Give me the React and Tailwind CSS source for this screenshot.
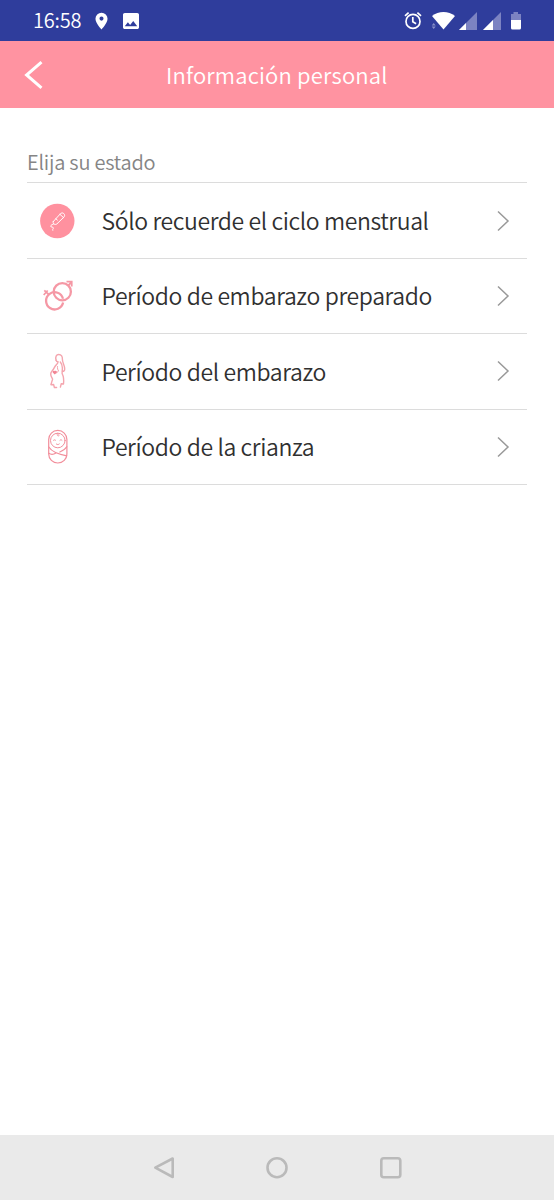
const CycleIcon = () => (
  <svg viewBox="0 0 50 50" className="h-[50px] w-[50px]" fill="none">
    <circle cx="23.300" cy="25" r="17.200" fill="#ff919f" />
    <g stroke="#fff" strokeWidth="1" strokeLinecap="round" strokeLinejoin="round">
      <path d="M19.400 25.400 26.200 18c1.100-1.300 2.500-1.400 3.500-.5 1.200 1.100 1.200 2.500.1 3.700L23 27.800c-1 .8-2.300.9-3.200.1-.8-.7-.9-1.700-.4-2.500Z" />
      <path d="m26 18.400 3.600 3.300M21.800 22.700l1.600 1.400M19.800 27.800c-1.400.5-3 1.400-3.200 2.300-.2 1.300 2.600.5 2.800 1.800.1 1-1.200 1.300-.7 2.400" />
    </g>
  </svg>
);

const PrepareIcon = () => (
  <svg viewBox="0 0 50 50" className="h-[50px] w-[50px]" fill="none" stroke="#f598a5" strokeWidth="2.300">
    <circle cx="28.300" cy="20.700" r="8.600" />
    <path d="M29 27.700a8.600 8.600 0 1 0 .1 3.900" />
    <path d="m34.200 14.700 3.200-3.500M32.500 10.600h5.200v5M14.800 23.500l-4.500-4.100M9.700 24l4-4.500" strokeWidth="1.800" />
  </svg>
);

const PregnancyIcon = () => (
  <svg viewBox="0 0 50 50" className="h-[50px] w-[50px]" fill="none" stroke="#f4a5ae" strokeWidth="1.400" strokeLinecap="round" strokeLinejoin="round">
    <path d="M22.100 14.200c-1-3.200.2-5.700 2.600-5.700 2.800 0 3.800 2 3.700 4.800-.1 3.500 2.300 6 2.300 9.700 0 1.800-1 2.400-2.300 2.200" />
    <path d="M22.100 14.200c.2 1.400.9 1.700 2 1.600-.2 2.300-2.300 3-3.500 5.300-1 1.900-1.600 3-2.700 4.200-1.500 1.700-1.400 3.900-.2 6l.9 1.800-1.700 5.600 2.700-.2.800 3h2.200" />
    <path d="M26.300 16c1.600 1.800 2 3.800 2.100 6l-.3 5.500c1.700 3.200 1.800 7 1.400 10.500l-2.300-.2-.8 3.300" />
    <path d="M23.500 20.500c-.3 2 .3 3.300 1.200 4.500l-2.200 1.800" strokeWidth="1" />
    <path d="M20.800 25.200c-1.200-1-2.700.3-1.900 1.600l1.900 1.800 1.800-1.800c.9-1.300-.6-2.600-1.800-1.600Z" fill="#f28493" stroke="none" />
  </svg>
);

const BabyIcon = () => (
  <svg viewBox="0 0 50 50" className="h-[50px] w-[50px]" fill="none" stroke="#f28e9b" strokeWidth="1.200" strokeLinecap="round">
    <rect x="14.700" y="8.400" width="18.200" height="32.600" rx="9.100" />
    <circle cx="23.800" cy="18.500" r="7.300" strokeWidth="1" />
    <path d="M23.300 11.300c-.4 1.800.2 2.900 1.300 2.600.8-.2.800-1.300.2-1.500" strokeWidth=".9" />
    <path d="M19.500 18.300c.6-.7 1.500-.7 2.100 0M25.900 18.300c.6-.7 1.500-.7 2.100 0M22.300 22c.8.800 2.200.8 3 0" strokeWidth="1" />
    <path d="M14.800 25c2.500 4 8 7 18 8.900M32.800 24.800c-1.500 2.500-4 4-7 5.200M14.800 31.300c2 1.300 4.800 1.200 7.200-.300" />
  </svg>
);

const options = [
  { label: 'Sólo recuerde el ciclo menstrual', icon: CycleIcon },
  { label: 'Período de embarazo preparado', icon: PrepareIcon },
  { label: 'Período del embarazo', icon: PregnancyIcon },
  { label: 'Período de la crianza', icon: BabyIcon },
];

const StatusBar = () => (
  <div className="flex h-[41px] items-center justify-between bg-[#2f3d9c] pl-[33px] pr-[32px] text-white">
    <div className="flex items-center">
      <span className="w-[62px] pb-[1px] text-[20px] font-[350] leading-[30px] tracking-[-0.2px]">16:58</span>
      <svg viewBox="0 0 14 18" className="h-[18px] w-[13px]" fill="currentColor">
        <path fillRule="evenodd" d="M7 0a6.500 6.500 0 0 0-6.500 6.500C.5 11 7 18 7 18s6.500-7 6.500-11.500A6.500 6.500 0 0 0 7 0Zm0 4.200a2.200 2.200 0 1 1 0 4.400 2.200 2.200 0 0 1 0-4.400Z" />
      </svg>
      <svg viewBox="3 3 18 18" className="ml-[15px] h-[16px] w-[16px]" fill="currentColor">
        <path d="M21 19V5c0-1.100-.9-2-2-2H5c-1.100 0-2 .9-2 2v14c0 1.100.9 2 2 2h14c1.100 0 2-.9 2-2ZM8.500 13.500l2.500 3 3.500-4.500 4.500 6H5l3.500-4.500Z" />
      </svg>
    </div>
    <svg viewBox="404 10 118 22" className="h-[22px] w-[118px]">
      <g fill="none" stroke="#fff" strokeWidth="1.700">
        <circle cx="413" cy="21.400" r="7" />
        <path d="M412.800 17v4.800l3.300 2M405 15.800l3.600-3.200M421 15.800l-3.600-3.200" />
      </g>
      <path d="M432 16c6.500-5.300 16.500-5.300 23 0l-11.500 13.500Z" fill="#fff" />
      <path d="m431.700 25.500 2-2.500 2 2.500ZM431.700 26.500l2 2.500 2-2.500Z" fill="#8890c8" />
      <path d="M477 12v18h-18Z" fill="#7c83c2" />
      <path d="M466 23v7h-7Z" fill="#fff" />
      <path d="M501 12v18h-18Z" fill="#7c83c2" />
      <path d="M493 20v10h-10Z" fill="#fff" />
      <path d="M511 20v-6h2.500v-2h4.500v2h3v6Z" fill="#7c83c2" />
      <path d="M511 20h10v8a1.500 1.500 0 0 1-1.500 1.500h-7a1.500 1.500 0 0 1-1.500-1.500Z" fill="#fff" />
    </svg>
  </div>
);

const Header = () => (
  <header className="flex h-[67px] items-center bg-[#ff93a1] pl-[24px] text-white">
    <button aria-label="Atrás">
      <svg viewBox="0 0 20 30" className="h-[30px] w-[20px]" fill="none" stroke="currentColor" strokeWidth="3">
        <path d="M17.500 2.200 2.600 15l14.900 12.800" />
      </svg>
    </button>
    <h1 className="ml-[122px] whitespace-nowrap pb-[2px] text-[22px] font-[350] leading-[32px] tracking-[0.18px]">Información personal</h1>
  </header>
);

const NavBar = () => (
  <nav className="flex h-[65px] items-center justify-center bg-[#eaeaea]">
    <svg viewBox="152 1156 250 24" className="h-[24px] w-[250px]" fill="none" stroke="#bababa" strokeWidth="2.600" strokeLinejoin="round">
      <path d="M172.700 1158.500v18.500l-17.400-9.300Z" />
      <circle cx="277" cy="1167.700" r="9.500" />
      <rect x="381.300" y="1158.300" width="19" height="19" rx="2.500" />
    </svg>
  </nav>
);

const App = () => {
  return (
    <div className="flex h-[1200px] w-[554px] flex-col overflow-hidden bg-white font-['Noto_Sans_CJK_SC',sans-serif]">
      <StatusBar />
      <Header />
      <main className="flex-1 px-[27px] pt-[38px]">
        <h2 className="h-[37.400px] border-b border-[#dcdcdc] text-[20px] font-[350] leading-[31px] tracking-[-0.22px] text-[#858585]">
          Elija su estado
        </h2>
        <ul>
          {options.map((option) => {
            const OptionIcon = option.icon;

            return (
              <li key={option.label} className="flex h-[75.400px] items-center border-b border-[#dcdcdc] pl-[7px] pr-[17px]">
                <OptionIcon />
                <span className="ml-[17.500px] flex-1 whitespace-nowrap pb-[1px] text-[23px] font-[350] leading-[34px] tracking-[-0.39px] text-[#303030]">
                  {option.label}
                </span>
                <svg viewBox="0 0 14 22" className="h-[22px] w-[14px]" fill="none" stroke="#999" strokeWidth="1.500">
                  <path d="m2 1.500 10 9.500L2 20.500" />
                </svg>
              </li>
            );
          })}
        </ul>
      </main>
      <NavBar />
    </div>
  );
};

export default App;
